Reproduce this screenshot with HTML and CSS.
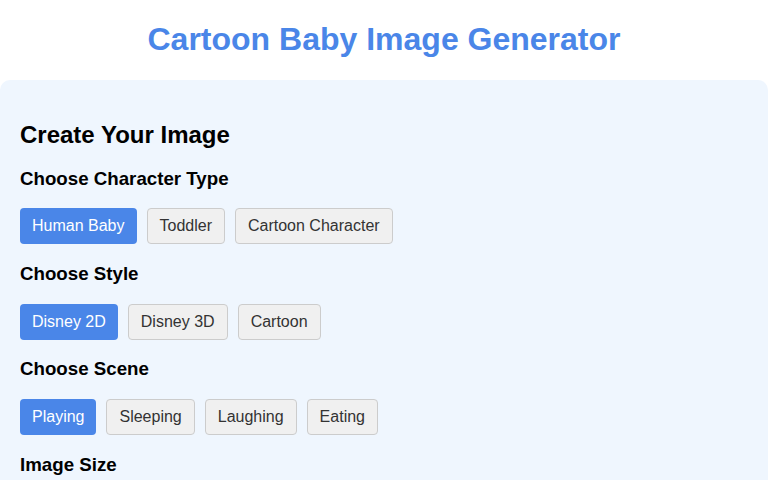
FILE: index.html
```html
<!DOCTYPE html>
<html lang="en">
<head>
  <meta charset="UTF-8">
  <meta name="viewport" content="width=device-width, initial-scale=1.0">
  <title>Cartoon Baby Image Generator</title>
  <link rel="stylesheet" href="styles.css">
</head>
<body>
  <h1>Cartoon Baby Image Generator</h1>
  <div class="panel">
    <h2>Create Your Image</h2>
    <h3>Choose Character Type</h3>
    <div class="options">
      <button class="active">Human Baby</button>
      <button>Toddler</button>
      <button>Cartoon Character</button>
    </div>
    <h3>Choose Style</h3>
    <div class="options">
      <button class="active">Disney 2D</button>
      <button>Disney 3D</button>
      <button>Cartoon</button>
    </div>
    <h3>Choose Scene</h3>
    <div class="options">
      <button class="active">Playing</button>
      <button>Sleeping</button>
      <button>Laughing</button>
      <button>Eating</button>
    </div>
    <h3>Image Size</h3>
    <div class="options">
      <button class="active">Square</button>
      <button>Portrait</button>
      <button>Landscape</button>
    </div>
  </div>
</body>
</html>
```

FILE: styles.css
```css
body { font-family: "Liberation Sans", Arial, sans-serif; margin: 0; background: #fff; color: #000; }
h1 { text-align: center; color: #4a86e8; font-size: 32px; margin: 21.44px 0; }
.panel { background: #eff6fe; border-radius: 10px; padding: 20px; }
h2 { font-size: 24px; margin: 21px 0 18px; }
h3 { font-size: 18.72px; margin: 18.72px 0; }
.options { display: flex; gap: 10px; margin-bottom: 15px; }
button { font-family: inherit; font-size: 16px; padding: 8px 12px; background: #f0f0f0; color: #333; border: 1px solid #ccc; border-radius: 4px; cursor: pointer; }
button.active { background: #4a86e8; border: none; color: #fff; }
```
